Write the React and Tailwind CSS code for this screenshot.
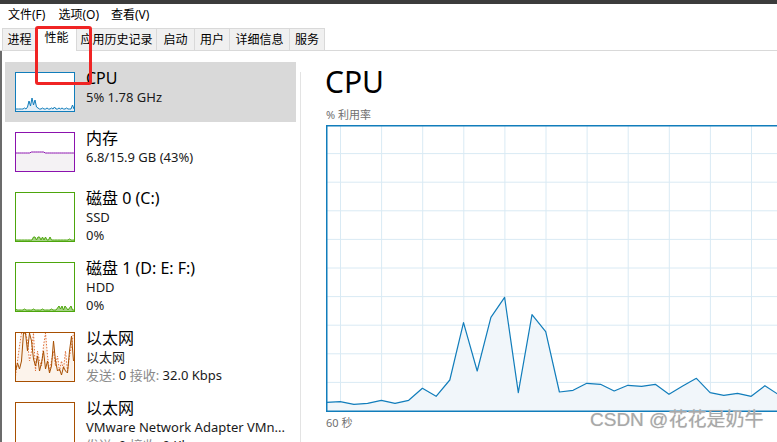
import React from 'react';

const font = "font-['Noto_Sans','Noto_Sans_CJK_SC',sans-serif]";

const tabs = [
  { label: '进程', cls: 'w-[35px] border-l' },
  { label: '性能', cls: 'w-[40px]', active: true },
  { label: '应用历史记录', cls: 'w-[80px]' },
  { label: '启动', cls: 'w-[38px]' },
  { label: '用户', cls: 'w-[35px]' },
  { label: '详细信息', cls: 'w-[60px]' },
  { label: '服务', cls: 'w-[35px]' },
];

// big cpu graph, page-y values sampled from the reference
const cpuData = [
  402.3, 401.7, 404.3, 403.3, 400.3, 403.3, 400.3, 388.3, 396.3, 380, 322.7, 371, 317.3, 297.3, 392.7, 314.7, 331.7,
  392, 390.3, 383.3, 384.3, 391, 385.3, 386.3, 384.3, 394.3, 386, 378.3, 392.7, 395.3, 393.3, 396.3, 385.7, 394.7,
];

function CpuChart() {
  const pts = cpuData.map((y, i) => [0.5 + i * 13.7, y - 125]);
  const line = pts.map((p) => p.join(',')).join(' ');
  const area = `0,286 ${line} ${pts[pts.length - 1][0]},286`;
  return (
    <svg width="470" height="287" className="block">
      {[1, 2, 3, 4, 5, 6, 7, 8, 9].map((k) => (
        <line key={'h' + k} x1="0" x2="470" y1={28.6 * k} y2={28.6 * k} stroke="#d9eaf4" strokeWidth="1" />
      ))}
      {[0, 1, 2, 3, 4, 5, 6, 7, 8, 9, 10].map((k) => (
        <line key={'v' + k} y1="0" y2="287" x1={14.5 + 41.1 * k} x2={14.5 + 41.1 * k} stroke="#d9eaf4" strokeWidth="1" />
      ))}
      <polygon points={area} fill="#f1f6fa" />
      <polyline points={line} fill="none" stroke="#117dbb" strokeWidth="1.2" strokeLinejoin="round" />
      <rect x="0.75" y="0.75" width="480" height="285.5" fill="none" stroke="#117dbb" strokeWidth="1.5" />
    </svg>
  );
}

function Spark({ h, color, fill, values, step, dashed, fillArea = true }) {
  const pts = values.map((v, i) => `${0.5 + i * step},${h - v}`).join(' ');
  const last = 0.5 + (values.length - 1) * step;
  return (
    <>
      {fillArea && <polygon points={`0.5,${h} ${pts} ${last},${h}`} fill={fill} />}
      <polyline
        points={pts}
        fill="none"
        stroke={color}
        strokeWidth="1"
        strokeDasharray={dashed ? '1.5 1.5' : undefined}
      />
    </>
  );
}

function Thumb({ h, border, children }) {
  return (
    <svg width="60" height={h} className="block shrink-0">
      <rect x="0" y="0" width="60" height={h} fill="#fff" />
      {children}
      <rect x="0.5" y="0.5" width="59" height={h - 1} fill="none" stroke={border} strokeWidth="1" />
    </svg>
  );
}

const cpuThumb = [
  2, 2, 2, 2, 2, 2, 3, 2, 4, 10, 5, 13, 6, 11, 4, 3, 2, 2, 3, 2, 2, 3, 2, 2, 3, 2, 4, 2, 2, 3, 2, 3, 2, 2, 3, 2, 2,
  2, 6, 2,
];
const memThumb = [18, 18, 18, 18, 18, 18, 18, 18, 19, 19, 19, 19, 19, 19, 19, 18, 18, 18, 18, 18, 18, 18, 18, 18, 18, 18, 18, 18, 18, 18, 18];
const disk0 = Array.from({ length: 40 }, (_, i) => ([12, 13, 15, 16, 18, 20, 23].includes(i) ? 4 : i === 36 ? 2 : 1));
const disk1 = Array.from({ length: 40 }, (_, i) => ([28, 29, 31, 33, 34, 36, 37].includes(i) ? (i % 2 ? 5 : 3) : i % 6 === 0 ? 2 : 1));
const ethA = [10, 18, 12, 20, 48, 48, 30, 48, 40, 22, 15, 25, 10, 18, 30, 12, 20, 8, 15, 40, 20, 10, 12, 6, 14, 10, 8, 30, 45, 20];
const ethB = [5, 20, 35, 48, 48, 48, 40, 20, 30, 48, 10, 30, 20, 15, 35, 48, 25, 10, 20, 30, 15, 25, 10, 20, 12, 30, 10, 25, 35, 48];

function Item({ cls, selected, thumb, title, lines }) {
  return (
    <div className={`flex ml-[3px] w-[291px] pl-[10px] pt-[10px] ${cls} ${selected ? 'bg-[#d9d9d9]' : ''}`}>
      {thumb}
      <div className="ml-[11px] -mt-[4px] whitespace-nowrap">
        <div className="text-[16px] leading-[20px] text-black">{title}</div>
        {lines.map((l, i) => (
          <div key={i} className="text-[13px] leading-[18px] text-[#1a1a1a]">
            {l}
          </div>
        ))}
      </div>
    </div>
  );
}

const Gray = ({ children }) => <span className="text-[#8a8a8a]">{children}</span>;

export default function App() {
  return (
    <div className={`relative w-[777px] h-[442px] overflow-hidden bg-white ${font}`}>
      <div className="h-[4px] bg-[#3c3c3c]" />

      <div className="h-[22px] flex items-center text-[12px] text-black">
        <span className="ml-[8px]">文件(F)</span>
        <span className="ml-[13px]">选项(O)</span>
        <span className="ml-[12px]">查看(V)</span>
      </div>

      <div className="h-[25px] flex items-end pl-[2px] border-b border-[#d9d9d9] text-[12px] text-black">
        {tabs.map((t) =>
          t.active ? (
            <div
              key={t.label}
              className={`${t.cls} h-[25px] -mb-px relative bg-white border-t border-r border-[#d9d9d9] flex items-center justify-center pb-[3px]`}
            >
              {t.label}
            </div>
          ) : (
            <div
              key={t.label}
              className={`${t.cls} h-[22px] bg-[#f0f0f0] border-t border-r border-[#d9d9d9] flex items-center justify-center`}
            >
              {t.label}
            </div>
          )
        )}
      </div>

      <div className="flex h-[391px] border-l-2 border-[#6b6b6b]">
        <div className="w-[298px] pt-[11px] shrink-0">
          <Item
            cls="h-[60px]"
            selected
            title="CPU"
            lines={['5% 1.78 GHz']}
            thumb={
              <Thumb h={40} border="#117dbb">
                <Spark h={39} color="#117dbb" fill="#e3eef7" values={cpuThumb} step={1.5} />
              </Thumb>
            }
          />
          <Item
            cls="h-[60px]"
            title="内存"
            lines={['6.8/15.9 GB (43%)']}
            thumb={
              <Thumb h={40} border="#8b12ae">
                <Spark h={39} color="#8b12ae" fill="#f4f2f4" values={memThumb} step={2} />
              </Thumb>
            }
          />
          <Item
            cls="h-[70px]"
            title="磁盘 0 (C:)"
            lines={['SSD', '0%']}
            thumb={
              <Thumb h={50} border="#4da60c">
                <Spark h={49} color="#4da60c" fill="#a6d286" values={disk0} step={1.5} />
              </Thumb>
            }
          />
          <Item
            cls="h-[70px]"
            title="磁盘 1 (D: E: F:)"
            lines={['HDD', '0%']}
            thumb={
              <Thumb h={50} border="#4da60c">
                <Spark h={49} color="#4da60c" fill="#a6d286" values={disk1} step={1.5} />
              </Thumb>
            }
          />
          <Item
            cls="h-[70px]"
            title="以太网"
            lines={[
              '以太网',
              <>
                <Gray>发送:</Gray> 0 <Gray>接收:</Gray> 32.0 Kbps
              </>,
            ]}
            thumb={
              <Thumb h={50} border="#a74f01">
                <Spark h={49} color="#e0703a" fill="#fcf3eb" values={ethB} step={2} dashed />
                <Spark h={49} color="#a74f01" fill="none" values={ethA} step={2} fillArea={false} />
              </Thumb>
            }
          />
          <Item
            cls="h-[70px]"
            title="以太网"
            lines={[
              'VMware Network Adapter VMn...',
              <>
                <Gray>发送:</Gray> 0 <Gray>接收:</Gray> 0 Kbps
              </>,
            ]}
            thumb={<Thumb h={50} border="#a74f01" />}
          />
        </div>

        <div className="w-px mt-[21px] bg-[#e3e3e3] shrink-0" />

        <div className="flex-1 min-w-0 overflow-hidden pl-[24px] pt-[13px]">
          <div className="text-[30px] leading-[36px] text-black">CPU</div>
          <div className="mt-[8px] ml-[1px] text-[11px] leading-[14px] text-[#707070]">% 利用率</div>
          <div className="mt-[3px] ml-[1px]">
            <CpuChart />
          </div>
          <div className="mt-[4px] ml-[1px] text-[11px] leading-[14px] text-[#707070]">60 秒</div>
        </div>
      </div>

      {/* red annotation box */}
      <div className="absolute left-[35px] top-[26px] w-[57px] h-[59px] border-[3px] border-[#f02424] rounded-[3px]" />

      {/* watermark */}
      <div className="absolute left-[590px] top-[407px] font-['Liberation_Sans','Noto_Sans_CJK_SC',sans-serif] text-[19px] leading-[26px] text-[#a8a8a8] whitespace-nowrap [text-shadow:0_0_1px_#cfcfcf]">
        CSDN @花花是奶牛
      </div>
    </div>
  );
}
